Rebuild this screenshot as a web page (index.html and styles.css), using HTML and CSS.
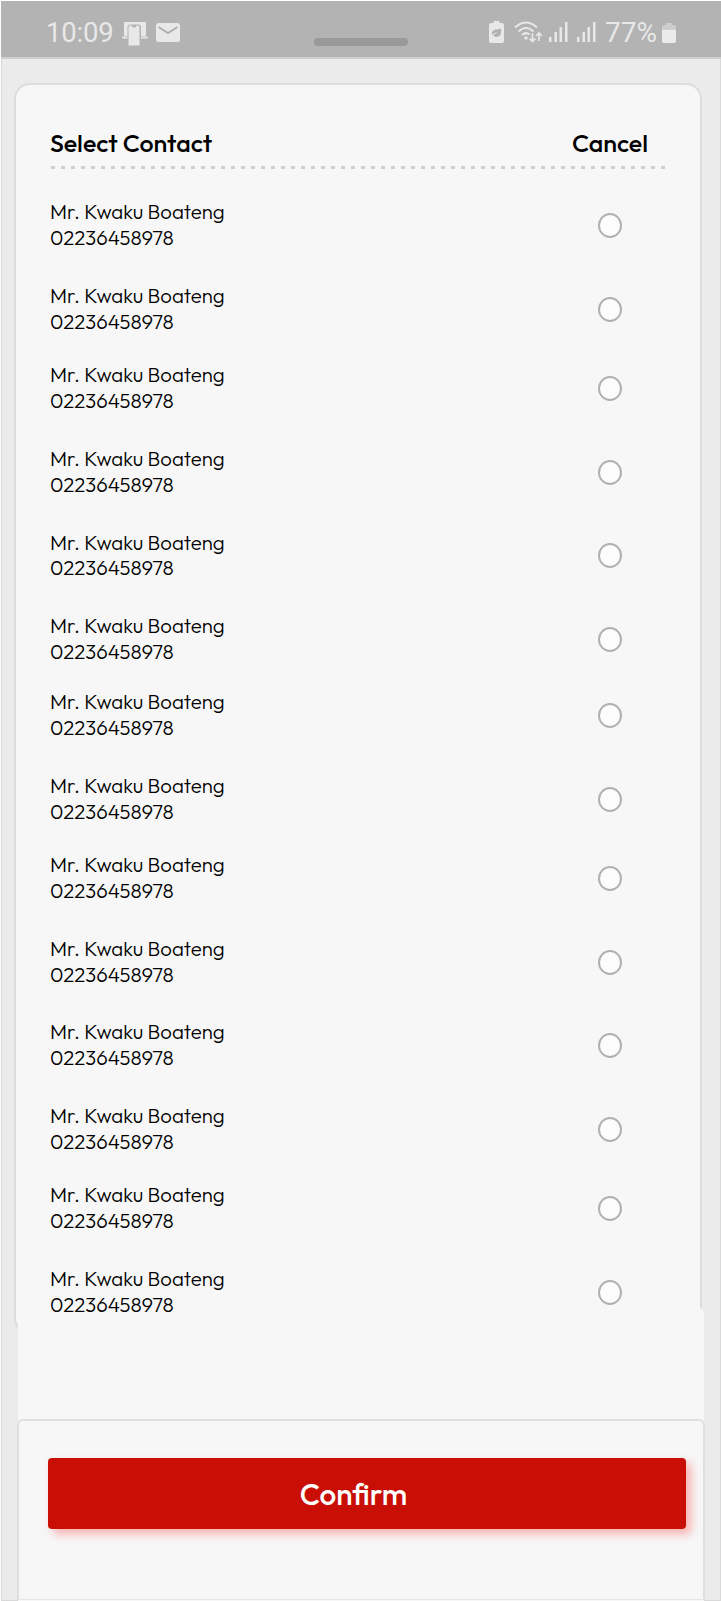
FILE: index.html
```html
<!DOCTYPE html>
<html lang="en">
<head>
<meta charset="utf-8">
<title>Select Contact</title>
<link rel="stylesheet" href="styles.css">
</head>
<body>
<main class="screen">
  <header class="status">
    <div class="status-left">
      <span class="clock">10:09</span>
      <svg class="ico-cast" width="26" height="26" viewBox="0 0 26 26" fill="#e8e8e8"><path d="M2 2Q2 1 3 1H23Q24 1 24 2V15H19V6Q19 3.500 16.500 3.500H8.500Q5.500 3.500 5.500 6V15H2zM0 15.500H5.500V17.500H1Q0 17 0 15.500zM19 15.500H26Q26 17 25 17.500H19z"/><path d="M6.500 6.500Q6.500 4.500 8.500 4.500H9.500Q9.800 6.500 11 6.500H13Q14.200 6.500 14.500 4.500H15.500Q17.500 4.500 17.500 6.500V24.500H6.500z"/></svg>
      <svg class="ico-mail" width="24" height="19" viewBox="0 0 24 19"><rect width="24" height="19" rx="2.500" fill="#e8e8e8"/><path d="M2.500 4L12 10L21.500 4" fill="none" stroke="#b0b0b0" stroke-width="2"/></svg>
    </div>
    <div class="status-right">
      <svg width="15" height="22" viewBox="0 0 15 22"><path d="M4.500 0H10.500V2H13Q15 2 15 4V20Q15 22 13 22H2Q0 22 0 20V4Q0 2 2 2H4.500z" fill="#e8e8e8"/><path d="M12 7.500Q13 15.500 7.500 16Q5.500 16 4.500 14.500L2 17Q5 12.500 9 11Q5 11.500 3 14Q2 8.500 8 8.500Q10.500 8.500 12 7.500z" fill="#b0b0b0"/></svg>
      <svg class="ico-wifi" width="28" height="23" viewBox="0 0 28 23" fill="none" stroke="#e8e8e8" stroke-width="2"><path d="M1 6.500Q12 -3.500 23 6.500M4.500 10.500Q12 3.500 19.500 10.500M8 14Q12 10.500 15.500 13.500"/><circle cx="12" cy="17" r="1.700" fill="#e8e8e8" stroke="none"/><path d="M18.500 12V20M15.500 17.500L18.500 20.500L21.500 17.500M25 20V12M22 15L25 12L28 15" stroke-width="1.700"/></svg>
      <svg class="ico-sig" width="19" height="20" viewBox="0 0 19 20" fill="#e8e8e8"><path d="M0 15H2.500V20H0zM5.500 10H8V20H5.500zM10.500 5H13V20H10.500zM16 0H18.500V20H16z"/></svg>
      <svg class="ico-sig2" width="19" height="20" viewBox="0 0 19 20" fill="#e8e8e8"><path d="M0 15H2.500V20H0zM5.500 10H8V20H5.500zM10.500 5H13V20H10.500zM16 0H18.500V20H16z"/></svg>
      <span class="percent">77%</span>
      <svg class="ico-batt" width="14" height="20" viewBox="0 0 14 20"><path d="M4 0H10V2H12Q14 2 14 4V8H0V4Q0 2 2 2H4z" fill="#cdcdcd"/><path d="M0 7H14V18Q14 20 12 20H2Q0 20 0 18z" fill="#ebebeb"/></svg>
    </div>
    <div class="handle"></div>
  </header>

  <section class="card">
    <div class="card-head">
      <h1 class="title">Select Contact</h1>
      <span class="cancel">Cancel</span>
    </div>
    <div class="rule"></div>
    <div class="list">
      <div class="row"><div class="who"><div class="name">Mr. Kwaku Boateng</div><div class="phone">02236458978</div></div><span class="radio"></span></div>
      <div class="row"><div class="who"><div class="name">Mr. Kwaku Boateng</div><div class="phone">02236458978</div></div><span class="radio"></span></div>
      <div class="row"><div class="who"><div class="name">Mr. Kwaku Boateng</div><div class="phone">02236458978</div></div><span class="radio"></span></div>
      <div class="row"><div class="who"><div class="name">Mr. Kwaku Boateng</div><div class="phone">02236458978</div></div><span class="radio"></span></div>
      <div class="row"><div class="who"><div class="name">Mr. Kwaku Boateng</div><div class="phone">02236458978</div></div><span class="radio"></span></div>
      <div class="row"><div class="who"><div class="name">Mr. Kwaku Boateng</div><div class="phone">02236458978</div></div><span class="radio"></span></div>
      <div class="row"><div class="who"><div class="name">Mr. Kwaku Boateng</div><div class="phone">02236458978</div></div><span class="radio"></span></div>
      <div class="row"><div class="who"><div class="name">Mr. Kwaku Boateng</div><div class="phone">02236458978</div></div><span class="radio"></span></div>
      <div class="row"><div class="who"><div class="name">Mr. Kwaku Boateng</div><div class="phone">02236458978</div></div><span class="radio"></span></div>
      <div class="row"><div class="who"><div class="name">Mr. Kwaku Boateng</div><div class="phone">02236458978</div></div><span class="radio"></span></div>
      <div class="row"><div class="who"><div class="name">Mr. Kwaku Boateng</div><div class="phone">02236458978</div></div><span class="radio"></span></div>
      <div class="row"><div class="who"><div class="name">Mr. Kwaku Boateng</div><div class="phone">02236458978</div></div><span class="radio"></span></div>
      <div class="row"><div class="who"><div class="name">Mr. Kwaku Boateng</div><div class="phone">02236458978</div></div><span class="radio"></span></div>
      <div class="row"><div class="who"><div class="name">Mr. Kwaku Boateng</div><div class="phone">02236458978</div></div><span class="radio"></span></div>
    </div>
  </section>

  <section class="sheet">
    <div class="footer">
      <button class="confirm" type="button">Confirm</button>
    </div>
  </section>
</main>
</body>
</html>
```
FILE: styles.css
```css
* { box-sizing: border-box; }
body {
  margin: 0;
  padding: 1px 0 0 1px;
  background: #fff;
  color: #000;
  font-family: Outfit, Lato, "Liberation Sans", sans-serif;
  height: 1601px;
  overflow: hidden;
}
.screen {
  width: 720px;
  height: 1600px;
  overflow: hidden;
  background: #ebebeb;
  box-shadow: inset 0 0 0 1px #d8d8d8;
}
.status {
  position: relative;
  height: 58px;
  background: #b3b3b3;
  border-bottom: 2px solid #cfcfcf;
  display: flex;
  justify-content: space-between;
  padding: 0 45px 0 45px;
  color: #e8e8e8;
  font-family: Roboto, sans-serif;
}
.status-left, .status-right { display: flex; align-items: flex-start; }
.status svg { display: block; flex: none; overflow: visible; }
.clock { font-size: 27.5px; line-height: 32px; padding-top: 16px; width: 69px; white-space: nowrap; letter-spacing: -0.2px; }
.ico-cast { margin: 20px 0 0 7px; }
.ico-mail { margin: 22px 0 0 8px; }
.status-right svg { margin-top: 20px; }
.status-right .ico-wifi { margin: 20px 0 0 10px; }
.status-right .ico-sig { margin: 21px 0 0 7px; }
.status-right .ico-sig2 { margin: 21px 0 0 9px; }
.percent { font-size: 28px; line-height: 32px; padding-top: 16px; margin-left: 9px; width: 53px; white-space: nowrap; }
.status-right .ico-batt { margin: 22px 0 0 4px; }
.handle {
  position: absolute;
  left: 313px;
  top: 37px;
  width: 94px;
  height: 8px;
  border-radius: 4px;
  background: #999;
}
.card {
  margin: 24px 0 0 13px;
  width: 688px;
  height: 1251px;
  border: 2px solid #dcdcdc;
  border-radius: 16px;
  background: #f7f7f7;
  padding: 42px 35px 0 34px;
}
.card-head {
  display: flex;
  justify-content: space-between;
  height: 39px;
  padding-right: 17px;
}
.title, .cancel {
  margin: 0;
  font-size: 25px;
  font-weight: 500;
  line-height: 33px;
  white-space: nowrap;
}
.rule {
  height: 3px;
  width: 614px;
  margin-left: 1px;
  background: repeating-linear-gradient(90deg, #d0d0d0 0 4px, transparent 4px 10px);
}
.list {
  position: relative;
  z-index: 1;
  padding-top: 30px;
  display: grid;
  grid-template-rows: 84px 79px 84px 83.500px 83.500px 76px 84px 79px 84px 83px 84px 79px 84px 51px;
}
.row {
  height: 51px;
  display: flex;
  justify-content: space-between;
  align-items: center;
  padding-right: 43px;
}
.name, .phone { font-size: 20.4px; font-weight: 300; line-height: 25.500px; white-space: nowrap; }
.radio {
  width: 24px;
  height: 25px;
  margin-top: 1px;
  border: 2px solid #b0b0b0;
  border-radius: 50%;
  background: #fcfcfc;
}
.sheet {
  position: relative;
  margin: -30px 0 0 17px;
  width: 686px;
  height: 300px;
  border-radius: 0 12px 0 0;
  background: #f7f7f7;
  padding-top: 115px;
}
.footer {
  margin-left: -1px;
  width: 688px;
  height: 181px;
  border: 2px solid #dfdfdf;
  border-bottom: 1px solid #e6e6e6;
  border-radius: 6px 6px 0 0;
  padding: 37px 0 0 29px;
}
.confirm {
  display: block;
  width: 638px;
  height: 71px;
  border: 0;
  border-radius: 4px;
  background: #c90f05;
  box-shadow: 5px 5px 10px rgba(255, 60, 60, 0.38);
  color: #fff;
  font-family: inherit;
  font-size: 29.6px;
  font-weight: 500;
  padding: 0 27px 0 0;
}
```
